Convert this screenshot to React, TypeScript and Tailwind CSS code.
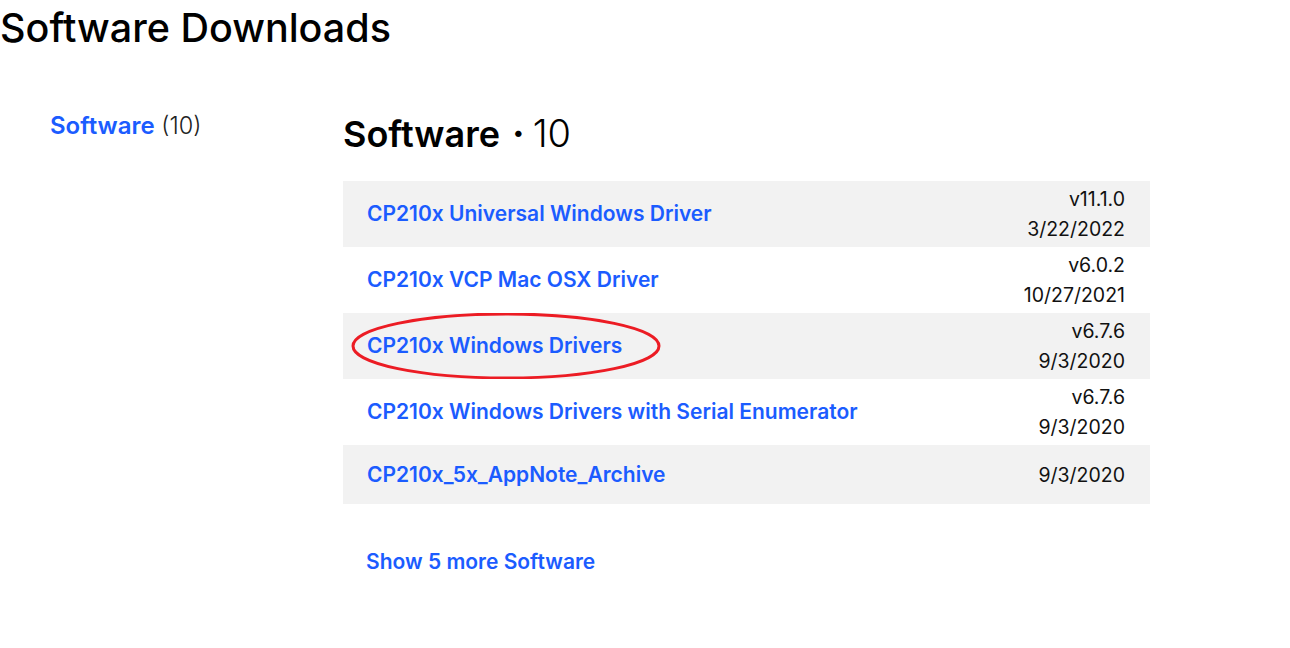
import React from "react";

const rows = [
  { name: "CP210x Universal Windows Driver", ver: "v11.1.0", date: "3/22/2022" },
  { name: "CP210x VCP Mac OSX Driver", ver: "v6.0.2", date: "10/27/2021" },
  { name: "CP210x Windows Drivers", ver: "v6.7.6", date: "9/3/2020", mark: true },
  { name: "CP210x Windows Drivers with Serial Enumerator", ver: "v6.7.6", date: "9/3/2020" },
  { name: "CP210x_5x_AppNote_Archive", ver: "", date: "9/3/2020" },
];

export default function App() {
  return (
    <div className="w-[1290px] h-[648px] bg-white text-black overflow-hidden" style={{ fontFamily: "Inter, 'Noto Sans', sans-serif" }}>
      <h1 className="text-[39.5px] leading-[56px] font-medium">Software Downloads</h1>
      <div className="flex mt-[44px]">
        <div className="w-[343px] pl-[50px] pt-[8px]">
          <span className="text-[#1b5cff] text-[24px] font-semibold">Software</span>
          <span className="text-[23.5px] font-light text-[#222]"> (10)</span>
        </div>
        <div className="w-[807px]">
          <div className="flex items-baseline h-[68px] pt-[4px]">
            <span className="text-[36px] font-semibold leading-[58px]">Software</span>
            <span className="text-[38px] font-bold leading-[58px] ml-[12px]">·</span>
            <span className="text-[38px] font-light leading-[58px] ml-[8px]">10</span>
          </div>
          <div className="mt-[13px]">
            {rows.map((r, i) => (
              <div
                key={i}
                className={`relative flex items-center justify-between pl-[24px] pr-[25px] ${i === 4 ? "h-[59px]" : "h-[66px]"} ${i % 2 === 0 ? "bg-[#f2f2f2]" : "bg-white"}`}
              >
                <span className="text-[#1b5cff] text-[21px] font-semibold">{r.name}</span>
                <div className="text-right text-[19.5px] leading-[30px] text-[#111]">
                  {r.ver && <div>{r.ver}</div>}
                  <div>{r.date}</div>
                </div>
                {r.mark && (
                  <svg className="absolute left-[7px] top-[0px]" width="318" height="68" viewBox="0 0 318 68">
                    <ellipse cx="156" cy="33" rx="153" ry="32" fill="none" stroke="#ec1c24" strokeWidth="3" />
                  </svg>
                )}
              </div>
            ))}
          </div>
          <div className="pl-[23px] mt-[42px]">
            <span className="text-[#1b5cff] text-[21px] font-semibold">Show 5 more Software</span>
          </div>
        </div>
      </div>
    </div>
  );
}
